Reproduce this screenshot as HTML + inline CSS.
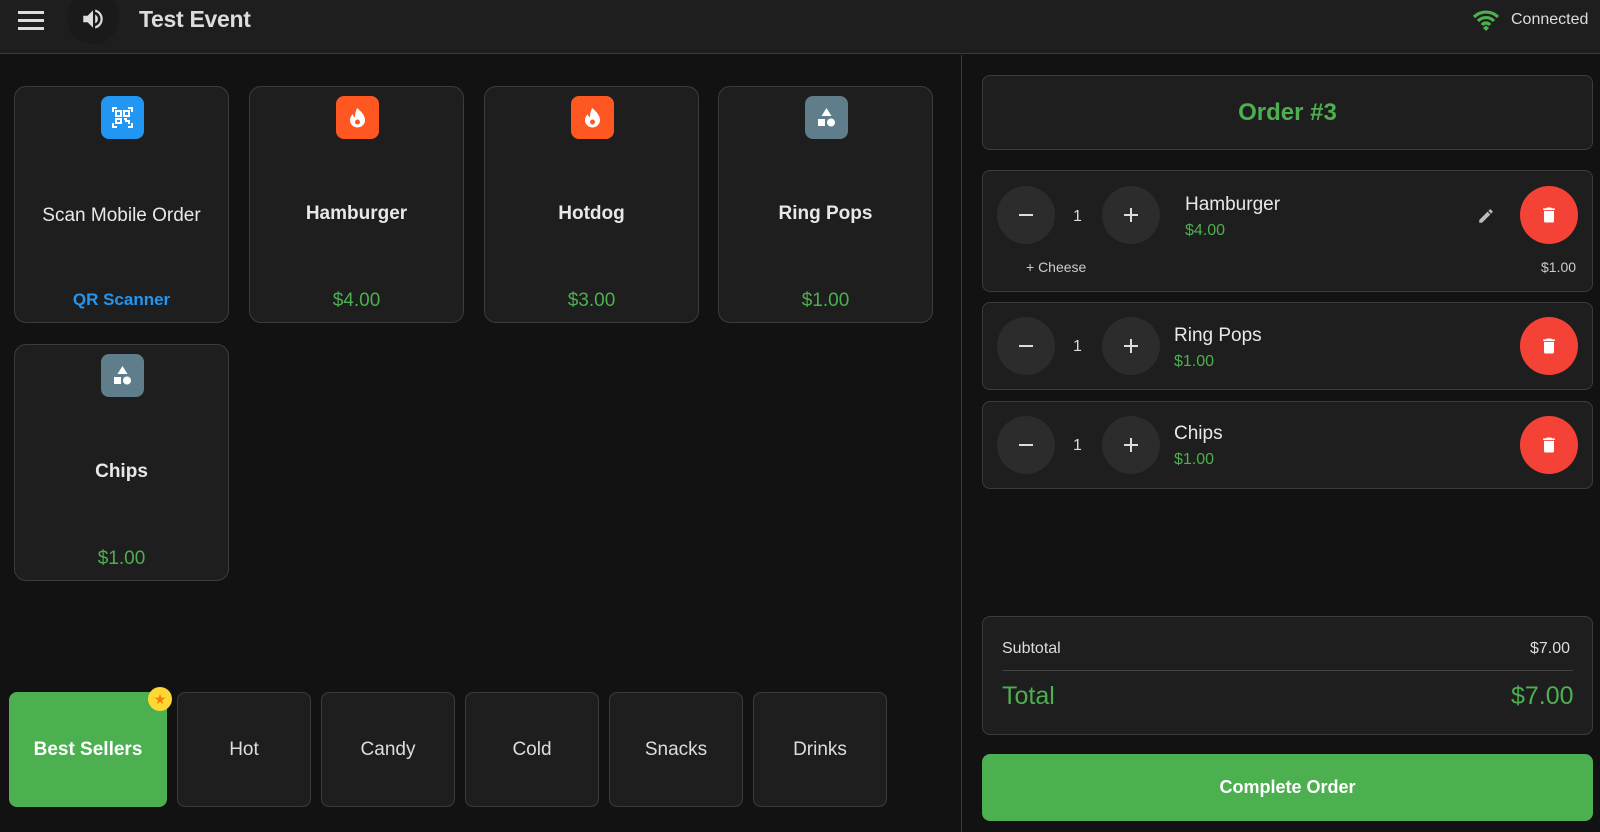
<!DOCTYPE html>
<html><head><meta charset="utf-8"><style>
*{box-sizing:border-box;margin:0;padding:0}
body{width:1600px;height:832px;background:#121212;font-family:"Liberation Sans",sans-serif;color:#e8e8e8;position:relative;overflow:hidden}
.a{position:absolute}
.hdr{left:0;top:0;width:1600px;height:54px;background:#1e1e1e;border-bottom:1px solid #3a3a3a}
.card{position:absolute;width:215px;height:237px;background:#1e1e1e;border:1px solid #3c3c3c;border-radius:12px;text-align:center}
.ic{position:absolute;left:86px;top:9px;width:43px;height:43px;border-radius:8px}
.card .nm{position:absolute;left:0;right:0;top:116px;font-size:19px;font-weight:bold}
.card .pr{position:absolute;left:0;right:0;bottom:10px;font-size:19px;color:#4caf50}
.cat{position:absolute;top:692px;width:134px;height:115px;background:#1e1e1e;border:1px solid #3c3c3c;border-radius:8px;display:flex;align-items:center;justify-content:center;font-size:19px;color:#ddd}
.box{position:absolute;left:982px;width:611px;background:#1e1e1e;border:1px solid #3c3c3c;border-radius:8px}
.circ{position:absolute;width:58px;height:58px;border-radius:50%;background:#2c2c2c;display:flex;align-items:center;justify-content:center}
.tr{position:absolute;width:58px;height:58px;border-radius:50%;background:#f44336;display:flex;align-items:center;justify-content:center}
.q{position:absolute;font-size:16px;color:#ddd}
.in{position:absolute;font-size:19px;color:#e8e8e8}
.ip{position:absolute;font-size:16px;color:#4caf50}
</style></head><body>
<div class="a hdr"></div>
<svg class="a" style="left:17px;top:10px" width="28" height="22" viewBox="0 0 28 22"><rect x="1" y="1" width="26" height="3" fill="#ddd"/><rect x="1" y="9" width="26" height="3" fill="#ddd"/><rect x="1" y="17" width="26" height="3" fill="#ddd"/></svg>
<div class="a" style="left:67px;top:-8px;width:52px;height:52px;border-radius:50%;background:#1a1a1a"></div>
<svg class="a" style="left:79px;top:6px" width="28" height="26" viewBox="0 0 24 24"><path d="M3 9v6h4l5 5V4L7 9H3zm13.5 3A4.5 4.5 0 0 0 14 7.97v8.05A4.47 4.47 0 0 0 16.5 12zM14 3.23v2.06a7 7 0 0 1 0 13.42v2.06A9 9 0 0 0 14 3.23z" fill="#ddd"/></svg>
<div class="a" style="left:139px;top:6px;font-size:23px;font-weight:bold;color:#ddd;letter-spacing:-0.3px">Test Event</div>
<svg class="a" style="left:1472px;top:9px" width="28" height="22" viewBox="0 0 28 22"><path d="M2 8a17 17 0 0 1 24 0M6 12a11 11 0 0 1 16 0M10 16a5 5 0 0 1 8 0" stroke="#4caf50" stroke-width="3.2" fill="none"/><path d="M11 19l3-2.5 3 2.5-3 3z" fill="#4caf50"/></svg>
<div class="a" style="left:1511px;top:11px;font-size:16px;color:#ddd">Connected</div>
<div class="a" style="left:961px;top:55px;width:1px;height:777px;background:#3a3a3a"></div>

<div class="card" style="left:14px;top:86px"><div class="ic" style="background:#2196f3"><svg width="43" height="43" viewBox="0 0 43 43" fill="none" stroke="#fff" stroke-width="2"><path d="M12 16v-4h4M27 12h4v4M31 27v4h-4M16 31h-4v-4"/><rect x="15" y="15" width="5" height="5"/><rect x="23" y="15" width="5" height="5"/><rect x="15" y="23" width="5" height="4"/><path d="M23 23h2v2h3v3"/></svg></div><div class="nm" style="font-weight:normal;top:118px">Scan Mobile Order</div><div class="pr" style="color:#2196f3;font-weight:bold;font-size:17px;bottom:12px">QR Scanner</div></div>
<div class="card" style="left:249px;top:86px"><div class="ic" style="background:#ff5722"><svg width="43" height="43" viewBox="0 0 43 43"><path d="M21 12c5 4 8 8 8 12a7.5 7.5 0 0 1-15 0c0-3 2-5 3-6 0 2 1 3 2 3 0-4 1-6 2-9z" fill="#fff"/><circle cx="21.5" cy="26" r="2.5" fill="#ff5722"/></svg></div><div class="nm">Hamburger</div><div class="pr">$4.00</div></div>
<div class="card" style="left:484px;top:86px"><div class="ic" style="background:#ff5722"><svg width="43" height="43" viewBox="0 0 43 43"><path d="M21 12c5 4 8 8 8 12a7.5 7.5 0 0 1-15 0c0-3 2-5 3-6 0 2 1 3 2 3 0-4 1-6 2-9z" fill="#fff"/><circle cx="21.5" cy="26" r="2.5" fill="#ff5722"/></svg></div><div class="nm">Hotdog</div><div class="pr">$3.00</div></div>
<div class="card" style="left:718px;top:86px"><div class="ic" style="background:#607d8b"><svg width="43" height="43" viewBox="0 0 43 43" fill="#fff"><path d="M21.5 12l5 8h-10z"/><rect x="13" y="23" width="7" height="7"/><circle cx="26" cy="26.5" r="4"/></svg></div><div class="nm">Ring Pops</div><div class="pr">$1.00</div></div>
<div class="card" style="left:14px;top:344px"><div class="ic" style="background:#607d8b"><svg width="43" height="43" viewBox="0 0 43 43" fill="#fff"><path d="M21.5 12l5 8h-10z"/><rect x="13" y="23" width="7" height="7"/><circle cx="26" cy="26.5" r="4"/></svg></div><div class="nm">Chips</div><div class="pr">$1.00</div></div>

<div class="cat" style="left:9px;width:158px;background:#4caf50;border-color:#4caf50;color:#fff;font-weight:bold">Best Sellers</div>
<div class="a" style="left:148px;top:687px;width:24px;height:24px;border-radius:50%;background:#fdd835;color:#f57c00;font-size:14px;text-align:center;line-height:24px">★</div>
<div class="cat" style="left:177px">Hot</div>
<div class="cat" style="left:321px">Candy</div>
<div class="cat" style="left:465px">Cold</div>
<div class="cat" style="left:609px">Snacks</div>
<div class="cat" style="left:753px">Drinks</div>

<div class="box" style="top:75px;height:75px;text-align:center;line-height:73px;font-size:24px;font-weight:bold;color:#4caf50">Order #3</div>

<div class="box" style="top:170px;height:122px"></div>
<div class="circ" style="left:997px;top:186px"><svg width="18" height="18"><rect x="2" y="8" width="14" height="2" fill="#ddd"/></svg></div>
<div class="q" style="left:1073px;top:208px">1</div>
<div class="circ" style="left:1102px;top:186px"><svg width="18" height="18"><rect x="2" y="8" width="14" height="2" fill="#ddd"/><rect x="8" y="2" width="2" height="14" fill="#ddd"/></svg></div>
<div class="in" style="left:1185px;top:194px">Hamburger</div>
<div class="ip" style="left:1185px;top:222px">$4.00</div>
<svg class="a" style="left:1477px;top:207px" width="18" height="18" viewBox="0 0 24 24"><path d="M3 17.25V21h3.75L17.81 9.94l-3.75-3.75L3 17.25zM20.71 7.04a1 1 0 0 0 0-1.41l-2.34-2.34a1 1 0 0 0-1.41 0l-1.83 1.83 3.75 3.75 1.83-1.83z" fill="#bbb"/></svg>
<div class="tr" style="left:1520px;top:186px"><svg width="20" height="20" viewBox="0 0 24 24"><path d="M6 19a2 2 0 0 0 2 2h8a2 2 0 0 0 2-2V7H6v12zM19 4h-3.5l-1-1h-5l-1 1H5v2h14V4z" fill="#fff"/></svg></div>
<div class="a" style="left:1026px;top:259px;font-size:14px;color:#ccc">+ Cheese</div>
<div class="a" style="left:1541px;top:259px;font-size:14px;color:#ccc">$1.00</div>

<div class="box" style="top:302px;height:88px"></div>
<div class="circ" style="left:997px;top:317px"><svg width="18" height="18"><rect x="2" y="8" width="14" height="2" fill="#ddd"/></svg></div>
<div class="q" style="left:1073px;top:338px">1</div>
<div class="circ" style="left:1102px;top:317px"><svg width="18" height="18"><rect x="2" y="8" width="14" height="2" fill="#ddd"/><rect x="8" y="2" width="2" height="14" fill="#ddd"/></svg></div>
<div class="in" style="left:1174px;top:325px">Ring Pops</div>
<div class="ip" style="left:1174px;top:353px">$1.00</div>
<div class="tr" style="left:1520px;top:317px"><svg width="20" height="20" viewBox="0 0 24 24"><path d="M6 19a2 2 0 0 0 2 2h8a2 2 0 0 0 2-2V7H6v12zM19 4h-3.5l-1-1h-5l-1 1H5v2h14V4z" fill="#fff"/></svg></div>

<div class="box" style="top:401px;height:88px"></div>
<div class="circ" style="left:997px;top:416px"><svg width="18" height="18"><rect x="2" y="8" width="14" height="2" fill="#ddd"/></svg></div>
<div class="q" style="left:1073px;top:437px">1</div>
<div class="circ" style="left:1102px;top:416px"><svg width="18" height="18"><rect x="2" y="8" width="14" height="2" fill="#ddd"/><rect x="8" y="2" width="2" height="14" fill="#ddd"/></svg></div>
<div class="in" style="left:1174px;top:423px">Chips</div>
<div class="ip" style="left:1174px;top:451px">$1.00</div>
<div class="tr" style="left:1520px;top:416px"><svg width="20" height="20" viewBox="0 0 24 24"><path d="M6 19a2 2 0 0 0 2 2h8a2 2 0 0 0 2-2V7H6v12zM19 4h-3.5l-1-1h-5l-1 1H5v2h14V4z" fill="#fff"/></svg></div>

<div class="box" style="top:616px;height:119px"></div>
<div class="a" style="left:1002px;top:640px;font-size:16px;color:#ddd">Subtotal</div>
<div class="a" style="left:1530px;top:640px;font-size:16px;color:#ddd">$7.00</div>
<div class="a" style="left:1002px;top:670px;width:571px;height:1px;background:#444"></div>
<div class="a" style="left:1002px;top:682px;font-size:25px;color:#4caf50">Total</div>
<div class="a" style="left:1511px;top:682px;font-size:25px;color:#4caf50">$7.00</div>

<div class="a" style="left:982px;top:754px;width:611px;height:67px;background:#4caf50;border-radius:8px;text-align:center;line-height:67px;font-size:18px;font-weight:bold;color:#fff">Complete Order</div>
</body></html>
